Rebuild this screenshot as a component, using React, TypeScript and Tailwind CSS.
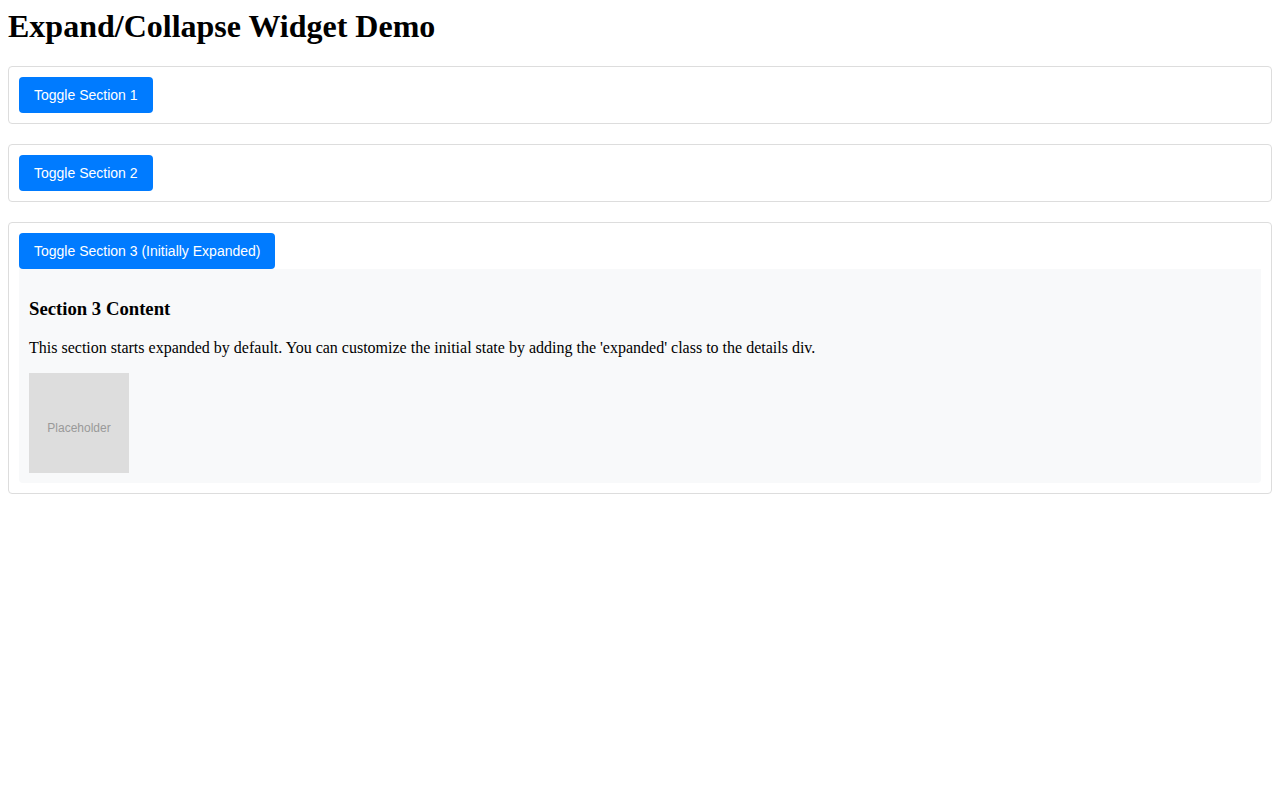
const sans = "font-['Liberation_Sans',Arial,sans-serif]";

function ToggleButton({ label }: { label: string }) {
  return (
    <button
      className={`block rounded-[4px] bg-[#007bff] px-[15px] py-[10px] text-[14px] leading-[16px] text-white ${sans}`}
    >
      {label}
    </button>
  );
}

export default function App() {
  return (
    <div className="min-h-[800px] bg-white p-2 font-['Liberation_Serif','Times_New_Roman',serif] text-[16px] leading-[18px] text-black">
      <h1 className="mb-[21px] text-[32px] leading-[37px] font-bold">
        Expand/Collapse Widget Demo
      </h1>

      <div className="mb-5 rounded-[4px] border border-[#dddddd] p-[10px]">
        <ToggleButton label="Toggle Section 1" />
      </div>

      <div className="mb-5 rounded-[4px] border border-[#dddddd] p-[10px]">
        <ToggleButton label="Toggle Section 2" />
      </div>

      <div className="rounded-[4px] border border-[#dddddd] p-[10px]">
        <ToggleButton label="Toggle Section 3 (Initially Expanded)" />
        <div className="rounded-b-[4px] bg-[#f8f9fa] p-[10px]">
          <h3 className="mt-[19px] mb-[20px] text-[18.72px] leading-[21px] font-bold">
            Section 3 Content
          </h3>
          <p className="mb-4">
            This section starts expanded by default. You can customize the
            initial state by adding the 'expanded' class to the details div.
          </p>
          <div
            className={`flex h-[100px] w-[100px] items-center justify-center bg-[#dddddd] pt-[10px] text-[12px] text-[#999999] ${sans}`}
          >
            Placeholder
          </div>
        </div>
      </div>
    </div>
  );
}
